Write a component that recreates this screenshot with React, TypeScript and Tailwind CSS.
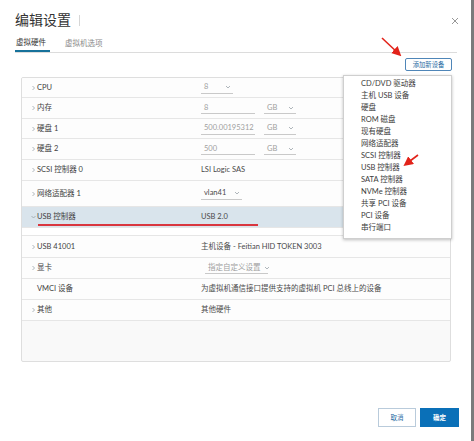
import React from "react";

const font = { fontFamily: 'Lato, "Noto Sans CJK SC", sans-serif' };

function Chevron({ down = false }: { down?: boolean }) {
  return (
    <svg width="5" height="6" viewBox="0 0 5 6" className={down ? "rotate-90" : ""}>
      <path d="M1.5 1 L3.5 3 L1.5 5" fill="none" stroke="#9aa3aa" strokeWidth="0.8" />
    </svg>
  );
}

function Caret() {
  return (
    <svg width="6" height="4" viewBox="0 0 6 4" className="shrink-0">
      <path d="M1 1 L3 3 L5 1" fill="none" stroke="#9aa3aa" strokeWidth="0.8" />
    </svg>
  );
}

function Select({ text, w, muted = true }: { text: string; w: string; muted?: boolean }) {
  return (
    <div
      className={`inline-flex h-[12px] items-center justify-between gap-[3px] whitespace-nowrap border-b border-[#c9c9c9] pl-[3px] pr-[2px] ${w} ${
        muted ? "text-[#a0a0a0]" : "text-[#4a4a4a]"
      }`}
    >
      <span>{text}</span>
      <Caret />
    </div>
  );
}

function Input({ text, w }: { text: string; w: string }) {
  return (
    <div className={`inline-flex h-[12px] items-center whitespace-nowrap border-b border-[#c9c9c9] pl-[3px] text-[#a0a0a0] ${w}`}>
      {text}
    </div>
  );
}

type Row = {
  label: string;
  h: string;
  chevron?: boolean;
  value: React.ReactNode;
  active?: boolean;
};

const rows: Row[] = [
  { label: "CPU", h: "h-[20px]", chevron: true, value: <Select text="8" w="w-[32px]" /> },
  {
    label: "内存",
    h: "h-[21px]",
    chevron: true,
    value: (
      <div className="flex gap-[9px]">
        <Input text="8" w="w-[54px]" />
        <Select text="GB" w="w-[32px]" />
      </div>
    ),
  },
  {
    label: "硬盘 1",
    h: "h-[20px]",
    chevron: true,
    value: (
      <div className="flex gap-[9px]">
        <Input text="500.00195312" w="w-[54px]" />
        <Select text="GB" w="w-[32px]" />
      </div>
    ),
  },
  {
    label: "硬盘 2",
    h: "h-[21px]",
    chevron: true,
    value: (
      <div className="flex gap-[9px]">
        <Input text="500" w="w-[54px]" />
        <Select text="GB" w="w-[32px]" />
      </div>
    ),
  },
  { label: "SCSI 控制器 0", h: "h-[21px]", chevron: true, value: <span className="text-[#4a4a4a]">LSI Logic SAS</span> },
  { label: "网络适配器 1", h: "h-[26px]", chevron: true, value: <Select text="vlan41" w="w-[41px]" muted={false} /> },
  { label: "USB 控制器", h: "h-[21px]", chevron: true, active: true, value: <span className="text-[#4a4a4a]">USB 2.0</span> },
];

const rows2: Row[] = [
  {
    label: "USB 41001",
    h: "h-[22px]",
    chevron: true,
    value: <span className="text-[#4a4a4a]">主机设备 - Feitian HID TOKEN 3003</span>,
  },
  {
    label: "显卡",
    h: "h-[21px]",
    chevron: true,
    value: (
      <div className="pl-[4px]">
        <Select text="指定自定义设置" w="w-[63px]" />
      </div>
    ),
  },
  {
    label: "VMCI 设备",
    h: "h-[21px]",
    value: <span className="text-[#4a4a4a] whitespace-nowrap">为虚拟机通信接口提供支持的虚拟机 PCI 总线上的设备</span>,
  },
  { label: "其他", h: "h-[21px]", chevron: true, value: <span className="text-[#4a4a4a]">其他硬件</span> },
];

function TableRow({ r }: { r: Row }) {
  return (
    <div
      className={`relative flex items-center border-b border-[#e6e6e6] pl-[9px] ${r.h} ${
        r.active ? "bg-[#d9e4ec]" : "bg-[#fdfdfd]"
      }`}
    >
      <div className="flex w-[6px] items-center">{r.chevron && <Chevron down={r.active} />}</div>
      <div className="w-[164px] text-[#3f3f3f]">{r.label}</div>
      <div className="flex flex-1 items-center overflow-hidden">{r.value}</div>
      {r.active && <div className="absolute left-[16px] top-[17px] h-[1.5px] w-[220px] bg-[#d9363e]" />}
    </div>
  );
}

const menu = [
  "CD/DVD 驱动器",
  "主机 USB 设备",
  "硬盘",
  "ROM 磁盘",
  "现有硬盘",
  "网络适配器",
  "SCSI 控制器",
  "USB 控制器",
  "SATA 控制器",
  "NVMe 控制器",
  "共享 PCI 设备",
  "PCI 设备",
  "串行端口",
];

export default function App() {
  return (
    <div className="relative flex h-[441px] w-[474px] overflow-hidden bg-white" style={font}>
      <div className="flex flex-1 flex-col pl-[15px] pr-[14px]">
        <div className="mt-[10px] flex h-[20px] items-center">
          <span className="text-[14px] leading-[20px] text-[#333]">编辑设置</span>
          <div className="ml-[8px] h-[11px] w-px bg-[#d6d6d6]" />
          <div className="flex-1" />
          <svg width="8" height="8" viewBox="0 0 8 8" className="mr-[-2px] mt-[2px]">
            <path d="M1 1 L7 7 M7 1 L1 7" stroke="#8c8c8c" strokeWidth="0.9" />
          </svg>
        </div>

        <div className="mt-[6px] flex h-[17px] border-b border-[#dcdcdc] text-[7.5px]">
          <div className="flex w-[35px] items-center border-b-2 border-[#17729b] pl-[1px] text-[#333]">虚拟硬件</div>
          <div className="ml-[15px] flex items-center text-[#8a8a8a]">虚拟机选项</div>
        </div>

        <div className="mt-[5px] flex justify-end pr-[5px]">
          <div className="flex h-[13px] w-[47px] items-center justify-center rounded-[2px] border border-[#4f86b8] text-[6.3px] text-[#2a6ca3]">
            添加新设备
          </div>
        </div>

        <div className="mx-[6px] mt-[6px] flex h-[285px] flex-col overflow-hidden rounded-[2px] border border-[#dedede] bg-[#f9f9f9] text-[7.5px]">
          {rows.map((r) => (
            <TableRow key={r.label} r={r} />
          ))}
          <div className="h-[8px] border-b border-[#e6e6e6] bg-white" />
          {rows2.map((r) => (
            <TableRow key={r.label} r={r} />
          ))}
        </div>

        <div className="mr-[-2px] mt-[46px] flex justify-end gap-[4px] text-[6.5px]">
          <div className="flex h-[19px] w-[38px] items-center justify-center border border-[#b9cbdb] bg-white text-[#2a6ca3]">
            取消
          </div>
          <div className="flex h-[19px] w-[39px] items-center justify-center bg-[#0a70b8] font-bold text-white">
            确定
          </div>
        </div>
      </div>
      <div className="w-[3px] bg-[#7b7b7b]" />

      <div className="absolute left-[343px] top-[75px] w-[109px] border border-[#cfcfcf] bg-white pb-[4px] pl-[17px] pt-[2px] text-[7.5px] text-[#3c3c3c] shadow-[0_1px_3px_rgba(0,0,0,0.25)]">
        {menu.map((m) => (
          <div key={m} className="h-[12px] leading-[12px]">
            {m}
          </div>
        ))}
      </div>

      <svg className="pointer-events-none absolute left-0 top-0" width="474" height="441">
        <defs>
          <marker id="ah" markerWidth="6" markerHeight="6" refX="4" refY="3" orient="auto">
            <path d="M0 0 L6 3 L0 6 Z" fill="#e2231a" />
          </marker>
        </defs>
        <line x1="382" y1="38" x2="399" y2="54" stroke="#e2231a" strokeWidth="1.6" markerEnd="url(#ah)" />
        <line x1="418" y1="155" x2="406" y2="164" stroke="#e2231a" strokeWidth="1.6" markerEnd="url(#ah)" />
      </svg>
    </div>
  );
}
